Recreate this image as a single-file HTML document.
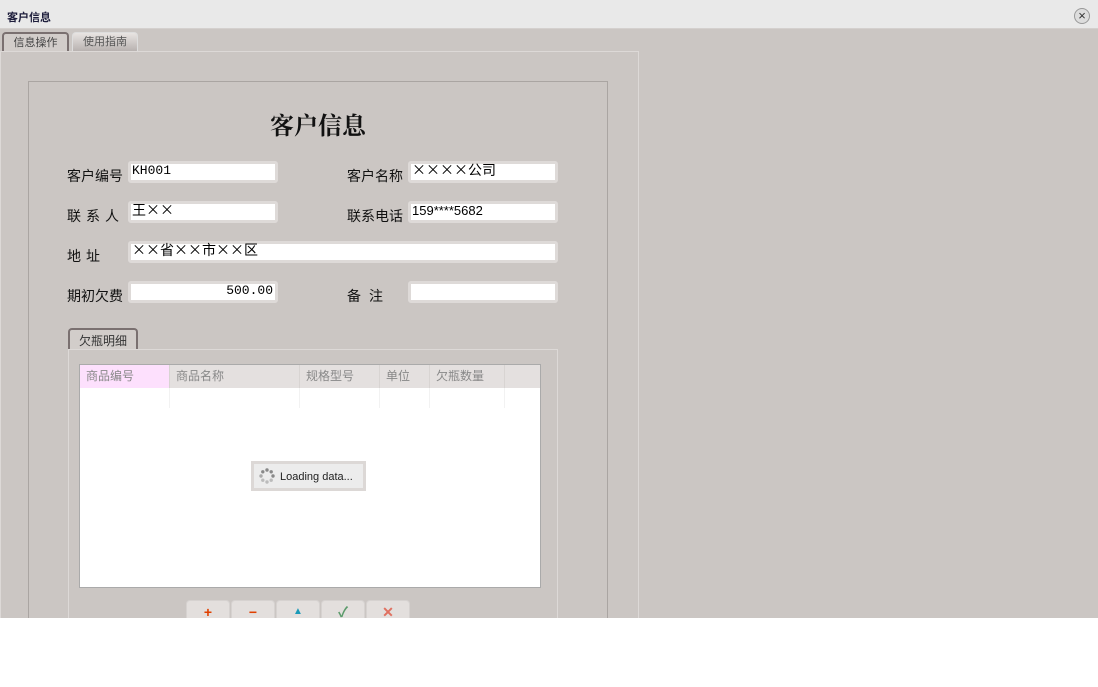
<!DOCTYPE html>
<html><head><meta charset="utf-8"><style>
*{margin:0;padding:0;box-sizing:border-box}
body{width:1098px;height:687px;background:#fff;position:relative;overflow:hidden;font-family:"Liberation Sans","Noto Sans CJK SC",sans-serif}
.a{position:absolute}
.lbl{position:absolute;font-size:14px;color:#111;font-family:"Liberation Sans","Noto Sans CJK SC",sans-serif}
.inp{position:absolute;height:22px;background:#fff;border:3px solid #dedad8;border-radius:3px;font-family:"Liberation Mono","Noto Sans CJK SC",monospace;font-size:13px;line-height:13px;padding-left:1px;color:#000}
.th{position:absolute;top:0;height:23px;font-size:12px;color:#888;line-height:23px;padding-left:6px;border-right:1px solid #d8d4d2}
.cl{position:absolute;top:23px;height:20px;border-right:1px solid #f2f2f2}
.btn{position:absolute;top:600px;width:44px;height:18px;background:#e3dfdd;border:1px solid #d6d2d0;border-bottom:none;border-radius:4px 4px 0 0;text-align:center;font-size:14px;line-height:22px;font-weight:bold}
</style></head><body>
<div class="a" style="left:0;top:0;width:1098px;height:618px;background:#cbc6c3"></div>
<div class="a" style="left:0;top:0;width:1098px;height:29px;background:#e9e9e9;border-bottom:1px solid #d4d0ce"></div>
<div class="a" style="left:7px;top:9px;font-size:11px;font-weight:bold;color:#1e1e3c">客户信息</div>
<div class="a" style="left:1074px;top:8px;width:16px;height:16px;border-radius:50%;background:#ddd;border:1px solid #999;font-size:13px;line-height:14px;text-align:center;color:#333">×</div>
<div class="a" style="left:2px;top:32px;width:67px;height:20px;background:#d2cdca;border:2px solid #7a7070;border-bottom:none;border-radius:4px 4px 0 0;font-size:11px;color:#444;text-align:center;line-height:18px">信息操作</div>
<div class="a" style="left:72px;top:32px;width:66px;height:19px;background:linear-gradient(#e8e4e2,#b8b2b0);border:1px solid #ddd;border-bottom:none;border-radius:4px 4px 0 0;font-size:11px;color:#555;text-align:center;line-height:19px">使用指南</div>
<div class="a" style="left:0;top:51px;width:639px;height:567px;border:1px solid #ddd9d7;border-bottom:none"></div>
<div class="a" style="left:28px;top:81px;width:580px;height:537px;border:1px solid #aaa5a2;border-bottom:none"></div>
<div class="a" style="left:270px;top:106px;font-size:24px;font-weight:bold;font-family:'Liberation Serif','Noto Serif CJK SC',serif;color:#111">客户信息</div>
<div class="lbl" style="left:67px;top:166px">客户编号</div>
<div class="inp" style="left:128px;top:161px;width:150px">KH001</div>
<div class="lbl" style="left:347px;top:166px">客户名称</div>
<div class="inp" style="left:408px;top:161px;width:150px;font-family:'Noto Sans CJK SC',sans-serif;font-size:14px">××××公司</div>
<div class="lbl" style="left:67px;top:206px;letter-spacing:5px">联系人</div>
<div class="inp" style="left:128px;top:201px;width:150px;font-family:'Noto Sans CJK SC',sans-serif;font-size:14px">王××</div>
<div class="lbl" style="left:347px;top:206px">联系电话</div>
<div class="inp" style="left:408px;top:201px;width:150px;font-family:'Liberation Sans',sans-serif">159****5682</div>
<div class="lbl" style="left:67px;top:246px;letter-spacing:5px">地址</div>
<div class="inp" style="left:128px;top:241px;width:430px;font-family:'Noto Sans CJK SC',sans-serif;font-size:14px">××省××市××区</div>
<div class="lbl" style="left:67px;top:286px">期初欠费</div>
<div class="inp" style="left:128px;top:281px;width:150px;text-align:right;padding-right:2px">500.00</div>
<div class="lbl" style="left:347px;top:286px;letter-spacing:8px">备注</div>
<div class="inp" style="left:408px;top:281px;width:150px"></div>
<div class="a" style="left:68px;top:328px;width:70px;height:22px;background:#d2cdca;border:2px solid #7a7070;border-bottom:none;border-radius:4px 4px 0 0;font-size:12px;color:#333;text-align:center;line-height:22px">欠瓶明细</div>
<div class="a" style="left:68px;top:349px;width:490px;height:269px;border:1px solid #ddd9d7;border-bottom:none"></div>
<div class="a" style="left:79px;top:364px;width:462px;height:224px;background:#fff;border:1px solid #aaa"></div>
<div class="a" style="left:80px;top:365px;width:460px;height:23px;background:#e4e0df">
<div class="th" style="left:0;width:90px;background:#fde0fd">商品编号</div>
<div class="th" style="left:90px;width:130px">商品名称</div>
<div class="th" style="left:220px;width:80px">规格型号</div>
<div class="th" style="left:300px;width:50px">单位</div>
<div class="th" style="left:350px;width:75px">欠瓶数量</div>
<div class="cl" style="left:0;width:90px"></div><div class="cl" style="left:90px;width:130px"></div><div class="cl" style="left:220px;width:80px"></div><div class="cl" style="left:300px;width:50px"></div><div class="cl" style="left:350px;width:75px"></div>
</div>
<div class="a" style="left:251px;top:461px;width:115px;height:30px;background:#ececec;border:3px solid #dcd8d6;font-size:11px;color:#222;line-height:26px;padding-left:26px">Loading data...</div>
<svg class="a" style="left:259px;top:468px" width="16" height="16"><g fill="#888"><circle cx="8" cy="2" r="1.7"/><circle cx="12.2" cy="3.8" r="1.7"/><circle cx="14" cy="8" r="1.7"/><circle cx="12.2" cy="12.2" r="1.7" fill="#bbb"/><circle cx="8" cy="14" r="1.7" fill="#bbb"/><circle cx="3.8" cy="12.2" r="1.7" fill="#bbb"/><circle cx="2" cy="8" r="1.7" fill="#aaa"/><circle cx="3.8" cy="3.8" r="1.7"/></g></svg>
<div class="btn" style="left:186px;color:#e04000">+</div>
<div class="btn" style="left:231px;color:#e04000">−</div>
<div class="btn" style="left:276px;color:#1a9ab8;font-size:10px">▲</div>
<div class="btn" style="left:321px;color:#5a9a6a">✓</div>
<div class="btn" style="left:366px;color:#e07060">✕</div>
<div class="a" style="left:0;top:618px;width:1098px;height:69px;background:#fff"></div>
</body></html>
